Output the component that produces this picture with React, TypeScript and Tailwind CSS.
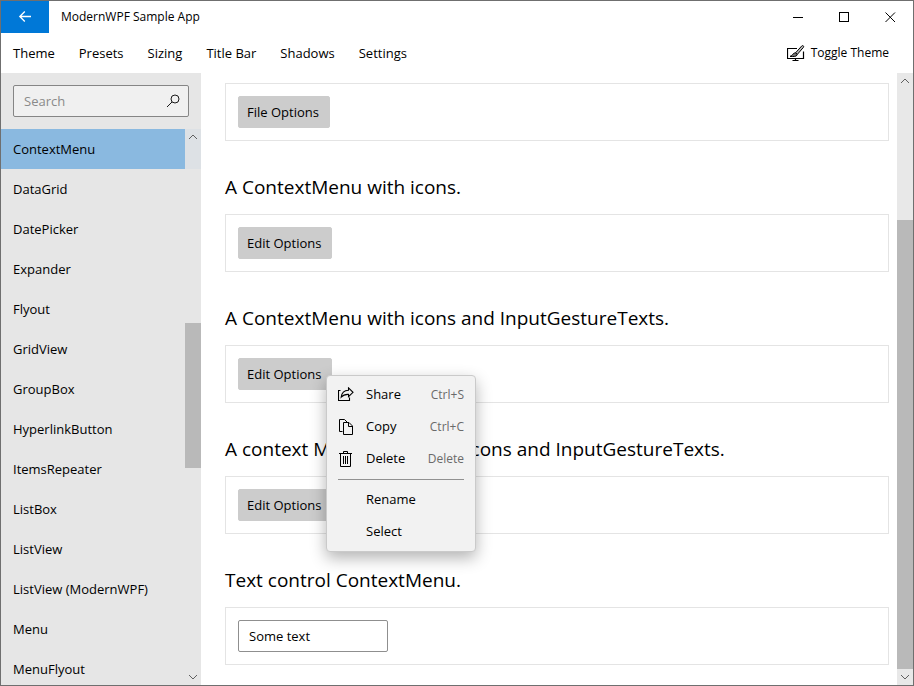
import type { ReactNode } from "react";

const NAV = ["Theme", "Presets", "Sizing", "Title Bar", "Shadows", "Settings"];

const CONTROLS = [
  "ContextMenu",
  "DataGrid",
  "DatePicker",
  "Expander",
  "Flyout",
  "GridView",
  "GroupBox",
  "HyperlinkButton",
  "ItemsRepeater",
  "ListBox",
  "ListView",
  "ListView (ModernWPF)",
  "Menu",
  "MenuFlyout",
];

function Chevron({ down = false }: { down?: boolean }) {
  return (
    <svg width="16" height="16" viewBox="0 0 16 16" fill="none" stroke="#606060" aria-hidden="true">
      <path d={down ? "M4 6 L8 10 L12 6" : "M4 10 L8 6 L12 10"} />
    </svg>
  );
}

function BackIcon() {
  return (
    <svg width="16" height="16" viewBox="0 0 16 16" fill="none" stroke="#fff" strokeWidth="1.3" aria-hidden="true">
      <path d="M2.8 7.5 H14 M7.8 2.5 L2.8 7.5 L7.8 12.5" />
    </svg>
  );
}

function SearchIcon() {
  return (
    <svg width="14" height="14" viewBox="0 0 14 14" fill="none" stroke="#1a1a1a" aria-hidden="true">
      <circle cx="9" cy="5" r="4" />
      <path d="M6 8 L1 13" />
    </svg>
  );
}

function ThemeIcon() {
  return (
    <svg width="18" height="16" viewBox="0 0 18 16" fill="none" stroke="#000" aria-hidden="true">
      <path d="M10 3.5 H0.5 V13.5 H16.5 V6.5" strokeWidth="1.2" />
      <path d="M8.5 13.5 V15.5 M5.5 15.5 H11.5" strokeWidth="1.2" />
      <path d="M8.6 7.8 L14.8 0.9 C15.8 0 17.3 1.2 16.4 2.4 L10.3 9.4 Z" fill="#bbb" />
      <path d="M7.6 8 C9 7.6 10.6 9 10 10.2 C9 11.8 6.4 11.6 3 11.4 C5.6 10.8 5.4 8.6 7.6 8 Z" fill="#777" />
    </svg>
  );
}

function ShareIcon() {
  return (
    <svg width="16" height="16" viewBox="0 0 16 16" fill="none" stroke="#000" strokeWidth="1.1" aria-hidden="true">
      <path d="M2.5 3.5 H0.5 V13.5 H11.5 V10.5" />
      <path d="M10.5 0.9 L15 5.3 L10.5 9.7 V7.4 C7.2 7.2 5 8.1 3.2 10.1 C3.6 6.1 6.2 3.4 10.5 3.2 Z" />
    </svg>
  );
}

function CopyIcon() {
  return (
    <svg width="16" height="16" viewBox="0 0 16 16" fill="none" stroke="#000" aria-hidden="true">
      <path d="M4.5 12.5 H1.5 V0.5 H6.5 L9 3" />
      <path d="M5.5 3.5 H11 L14.5 7 V15.5 H5.5 Z M10.5 3.5 V7.5 H14.5" />
    </svg>
  );
}

function DeleteIcon() {
  return (
    <svg width="16" height="16" viewBox="0 0 16 16" fill="none" stroke="#000" aria-hidden="true">
      <path d="M1 2.5 H14 M5.5 2.5 V0.5 H9.5 V2.5 M2.5 2.5 V15.5 H12.5 V2.5" />
      <path d="M5.5 5 V13 M7.5 5 V13 M9.5 5 V13" />
    </svg>
  );
}

function WindowButton({ label, children }: { label: string; children: ReactNode }) {
  return (
    <button type="button" aria-label={label} className="flex h-8 w-[46px] items-center justify-center">
      <svg width="11" height="11" viewBox="0 0 11 11" fill="none" stroke="#000" aria-hidden="true">
        {children}
      </svg>
    </button>
  );
}

function TitleBar() {
  return (
    <header className="flex h-8 shrink-0 items-center">
      <button type="button" aria-label="Back" className="flex h-8 w-12 items-center justify-center bg-[#0078d7]">
        <BackIcon />
      </button>
      <h1 className="flex-1 pl-3 text-xs">ModernWPF Sample App</h1>
      <WindowButton label="Minimize">
        <path d="M0 5.5 H10" />
      </WindowButton>
      <WindowButton label="Maximize">
        <rect x="0.5" y="0.5" width="9" height="9" />
      </WindowButton>
      <WindowButton label="Close">
        <path d="M0.5 0.5 L10 10 M10 0.5 L0.5 10" />
      </WindowButton>
    </header>
  );
}

function MenuBar() {
  return (
    <nav className="flex h-10 shrink-0 items-center">
      {NAV.map((name) => (
        <button key={name} type="button" className="h-10 px-3 pt-0.5">
          {name}
        </button>
      ))}
      <button type="button" className="ml-auto flex h-10 items-center gap-1.5 pr-6 text-xs">
        <ThemeIcon />
        Toggle Theme
      </button>
    </nav>
  );
}

function Sidebar() {
  return (
    <aside className="flex w-[200px] shrink-0 flex-col bg-[#e6e6e6]">
      <label className="m-3 flex h-8 shrink-0 items-center rounded-xs border border-[#858585] bg-[#f0f0f0] pr-2 pl-2.5">
        <input
          type="text"
          aria-label="Search"
          placeholder="Search"
          className="min-w-0 flex-1 bg-transparent pt-0.5 outline-none placeholder:text-[#8a8a8a]"
        />
        <SearchIcon />
      </label>
      <div className="relative min-h-0 flex-1 overflow-hidden">
        <ul>
          {CONTROLS.map((name, i) => (
            <li key={name}>
              <a
                href="#"
                aria-current={i === 0 ? "page" : undefined}
                className="flex h-10 items-center px-3 pt-0.5 aria-[current=page]:bg-[#8ab9e0]"
              >
                {name}
              </a>
            </li>
          ))}
        </ul>
        <div className="absolute inset-y-0 right-0 flex w-4 flex-col bg-[#e6e6e6]/90">
          <Chevron />
          <div className="flex flex-1 flex-col pt-[178px]">
            <div className="h-[145px] bg-[#b9b9b9]" />
          </div>
          <Chevron down />
        </div>
      </div>
    </aside>
  );
}

function Heading({ children }: { children: ReactNode }) {
  return <h2 className="mt-8 mb-[13px] text-[19px] leading-7 whitespace-nowrap">{children}</h2>;
}

function Card({ children }: { children: ReactNode }) {
  return <div className="flex border border-[#e4e4e4] p-3">{children}</div>;
}

function OptionsButton({ children }: { children: ReactNode }) {
  return (
    <button type="button" className="h-8 rounded-xs border border-[#cccccc] bg-[#cccccc] pt-0.5 pr-2.5 pl-2">
      {children}
    </button>
  );
}

function MenuItem({ icon, label, shortcut }: { icon?: ReactNode; label: string; shortcut?: string }) {
  return (
    <button type="button" role="menuitem" className="flex h-8 items-center px-2 text-left">
      <span className="mr-3 w-4 shrink-0">{icon}</span>
      <span className="flex-1">{label}</span>
      <span className="text-xs text-[#6a6a6a]">{shortcut}</span>
    </button>
  );
}

function ContextMenu() {
  return (
    <div
      role="menu"
      className="absolute top-[17px] left-[88px] z-10 flex w-[150px] flex-col rounded-sm border border-[#cacaca] bg-[#f2f2f2] p-[3px] shadow-[0_6px_16px_rgba(0,0,0,0.3)]"
    >
      <MenuItem icon={<ShareIcon />} label="Share" shortcut="Ctrl+S" />
      <MenuItem icon={<CopyIcon />} label="Copy" shortcut="Ctrl+C" />
      <MenuItem icon={<DeleteIcon />} label="Delete" shortcut="Delete" />
      <hr className="mx-2 my-1 border-[#919191]" />
      <MenuItem label="Rename" />
      <MenuItem label="Select" />
    </div>
  );
}

export default function App() {
  return (
    <div className="flex h-screen flex-col overflow-hidden border border-[#6f6f6f] bg-white font-['Open_Sans','Noto_Sans',sans-serif] text-[13px] text-black">
      <TitleBar />
      <MenuBar />
      <div className="flex min-h-0 flex-1">
        <Sidebar />
        <main className="min-w-0 flex-1 overflow-hidden pt-2.5 pr-2 pl-6">
          <Card>
            <OptionsButton>File Options</OptionsButton>
          </Card>
          <Heading>A ContextMenu with icons.</Heading>
          <Card>
            <OptionsButton>Edit Options</OptionsButton>
          </Card>
          <Heading>A ContextMenu with icons and InputGestureTexts.</Heading>
          <Card>
            <div className="relative">
              <OptionsButton>Edit Options</OptionsButton>
              <ContextMenu />
            </div>
          </Card>
          <Heading>A context Menu with some icons and InputGestureTexts.</Heading>
          <Card>
            <OptionsButton>Edit Options</OptionsButton>
          </Card>
          <Heading>Text control ContextMenu.</Heading>
          <Card>
            <input
              type="text"
              aria-label="Text control"
              defaultValue="Some text"
              className="h-8 w-[150px] rounded-xs border border-[#8f8f8f] bg-white px-2.5 outline-none"
            />
          </Card>
        </main>
        <div className="flex w-4 shrink-0 flex-col bg-[#e8e8e8]">
          <Chevron />
          <div className="flex flex-1 flex-col pt-[131px]">
            <div className="flex-1 bg-[#b9b9b9]" />
          </div>
          <Chevron down />
        </div>
      </div>
    </div>
  );
}
